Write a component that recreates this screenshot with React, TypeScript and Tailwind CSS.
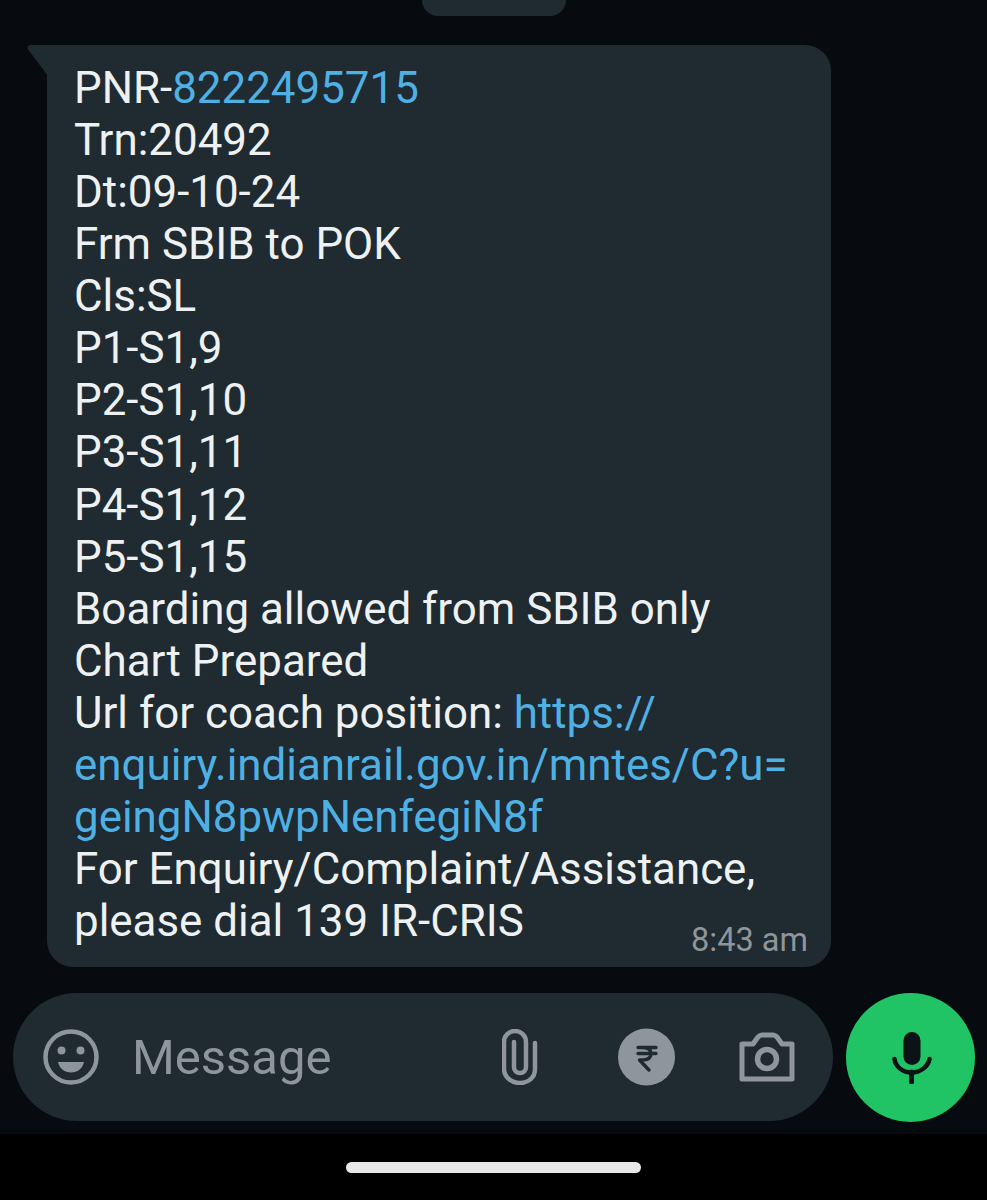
const lines = [
  "Trn:20492",
  "Dt:09-10-24",
  "Frm SBIB to POK",
  "Cls:SL",
  "P1-S1,9",
  "P2-S1,10",
  "P3-S1,11",
  "P4-S1,12",
  "P5-S1,15",
  "Boarding allowed from SBIB only",
  "Chart Prepared",
];

const SmileIcon = () => (
  <svg width="56" height="56" viewBox="0 0 56 56" className="shrink-0">
    <circle cx="28" cy="28" r="25.5" fill="none" stroke="#8e969b" strokeWidth="4.5" />
    <circle cx="18.5" cy="21.5" r="4" fill="#8e969b" />
    <circle cx="37.5" cy="21.5" r="4" fill="#8e969b" />
    <path d="M15 33h26c-1.5 6.5-6.5 10.5-13 10.5S16.500 39.500 15 33z" fill="#8e969b" />
  </svg>
);

const ClipIcon = () => (
  <svg width="36" height="56" viewBox="0 0 36 56" className="shrink-0">
    <path
      d="M33 14v26c0 8.500-6.500 14-15 14S2 48 2 40V13C2 6.500 7 2 13 2s11 4.500 11 11v25c0 3.500-2.500 6-6 6s-6-2.500-6-6V13"
      fill="none"
      stroke="#8e969b"
      strokeWidth="4.500"
      strokeLinecap="round"
    />
  </svg>
);

const RupeeIcon = () => (
  <svg width="57" height="58" viewBox="0 0 57 58" className="shrink-0">
    <circle cx="28.500" cy="29" r="28.500" fill="#8e969b" />
    <path
      d="M20 19.500h18M20 25.500h18M24 19.500c6 0 9 2 9 6s-3 6.500-9 6.500h-2.500L31 42"
      fill="none"
      stroke="#1f2a31"
      strokeWidth="3.400"
      strokeLinecap="round"
      strokeLinejoin="round"
    />
  </svg>
);

const CameraIcon = () => (
  <svg width="56" height="50" viewBox="0 0 56 50" className="shrink-0">
    <path
      d="M3 12h11l5-7c1-1 2-2 4-2h11c2 0 3 1 4 2l5 7h10v35H3z"
      fill="none"
      stroke="#8e969b"
      strokeWidth="5"
      strokeLinejoin="round"
    />
    <circle cx="28" cy="27" r="9.500" fill="none" stroke="#8e969b" strokeWidth="5.500" />
  </svg>
);

const MicIcon = () => (
  <svg width="40" height="52" viewBox="0 0 40 52" className="ml-[2px] shrink-0">
    <rect x="11.500" y="0" width="17" height="33" rx="8.500" fill="#0c1317" />
    <path d="M2.500 27c1 8 8.500 13.500 17 13.500S36 35 37.500 27" fill="none" stroke="#0c1317" strokeWidth="4.500" strokeLinecap="round" />
    <path d="M19.500 40v10" fill="none" stroke="#0c1317" strokeWidth="5" strokeLinecap="round" />
  </svg>
);

export default function App() {
  return (
    <div className="relative flex h-[1200px] w-[987px] flex-col overflow-hidden bg-[#070b0f] font-['Roboto',sans-serif]">
      {/* clipped pill at the top of the thread */}
      <div className="absolute left-[422px] top-[-20px] h-[36px] w-[144px] rounded-[16px] bg-[#1f2a31]" />

      <div className="relative ml-[47px] mt-[45px] h-[922px] w-[784px] rounded-b-[26px] rounded-tr-[26px] bg-[#1f2a31] pl-[27px] pt-[17px] text-[43.9px] leading-[52.07px] text-[#eef1f2]">
        {/* bubble tail */}
        <svg width="21" height="31" viewBox="0 0 21 31" className="absolute left-[-20px] top-0">
          <path d="M21 0H4C0.500 0-0.500 2.500 1.500 5L21 31z" fill="#1f2a31" />
        </svg>
        <div>
          PNR-<span className="text-[#4fb0e3]">8222495715</span>
        </div>
        {lines.map((line) => (
          <div key={line}>{line}</div>
        ))}
        <div>
          Url for coach position: <span className="text-[#4fb0e3]">https://</span>
        </div>
        <div className="text-[#4fb0e3]">enquiry.indianrail.gov.in/mntes/C?u=</div>
        <div className="text-[#4fb0e3]">geingN8pwpNenfegiN8f</div>
        <div>For Enquiry/Complaint/Assistance,</div>
        <div>please dial 139 IR-CRIS</div>
        <div className="absolute bottom-[7px] right-[23px] text-[32.500px] leading-[40px] text-[#8e969b]">8:43 am</div>
      </div>

      <div className="ml-[13px] mt-[26px] flex items-start gap-[13px]">
        <div className="flex h-[128px] w-[820px] items-center rounded-full bg-[#1f2a31] pl-[30px]">
          <SmileIcon />
          <span className="relative top-[1px] ml-[33px] w-[370px] text-[49px] leading-[52px] text-[#8e969b]">Message</span>
          <ClipIcon />
          <div className="ml-[80px]">
            <RupeeIcon />
          </div>
          <div className="ml-[64px]">
            <CameraIcon />
          </div>
        </div>
        <div className="flex size-[129px] items-center justify-center rounded-full bg-[#20c464]">
          <MicIcon />
        </div>
      </div>

      <div className="mt-[12px] flex flex-1 justify-center bg-black pt-[28px]">
        <div className="h-[11px] w-[295px] rounded-full bg-[#e8e8e8]" />
      </div>
    </div>
  );
}
